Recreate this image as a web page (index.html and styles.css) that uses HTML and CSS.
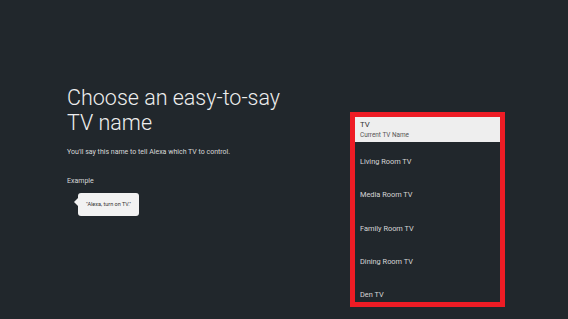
FILE: index.html
```html
<!DOCTYPE html>
<html lang="en">
<head>
  <meta charset="UTF-8">
  <title>Choose a TV name</title>
  <link rel="stylesheet" href="styles.css">
</head>
<body>
  <main class="screen">
    <section class="intro">
      <h1>Choose an easy-to-say<br>TV name</h1>
      <p class="lead">You'll say this name to tell Alexa which TV to control.</p>
      <p class="example-label">Example</p>
      <div class="bubble">"Alexa, turn on TV."</div>
    </section>
    <section class="picker">
      <ul class="names">
        <li class="name current">
          <span class="name-title">TV</span>
          <span class="name-sub">Current TV Name</span>
        </li>
        <li class="name">Living Room TV</li>
        <li class="name">Media Room TV</li>
        <li class="name">Family Room TV</li>
        <li class="name">Dining Room TV</li>
        <li class="name">Den TV</li>
      </ul>
    </section>
  </main>
</body>
</html>
```

FILE: styles.css
```css
body {
  margin: 0;
  background-color: #21272c;
  color: #e8e8e8;
  font-family: Roboto, "Liberation Sans", sans-serif;
}
.screen {
  width: 568px;
  height: 319px;
  display: flex;
  overflow: hidden;
}
.intro {
  width: 283px;
  padding: 85px 0 0 67px;
}
h1 {
  margin: 0;
  font-size: 21.5px;
  font-weight: 300;
  line-height: 25px;
  color: #eeeeee;
}
.lead {
  margin: 13px 0 0;
  font-size: 7px;
  line-height: 8px;
  color: #d8d8d8;
}
.example-label {
  margin: 21px 0 0;
  font-size: 7px;
  line-height: 8px;
  color: #d8d8d8;
}
.bubble {
  position: relative;
  display: inline-block;
  margin: 8px 0 0 11px;
  padding: 8px 8px 9px 8px;
  background: #f2f2f2;
  color: #333;
  font-size: 5.5px;
  line-height: 6px;
  border-radius: 3px;
}
.bubble::before {
  content: "";
  position: absolute;
  left: -4px;
  top: 5px;
  border-top: 4px solid transparent;
  border-bottom: 4px solid transparent;
  border-right: 4px solid #f2f2f2;
}
.picker {
  padding-top: 112px;
}
.names {
  list-style: none;
  margin: 0;
  padding: 0;
  width: 145px;
  height: 185px;
  border: 5px solid #ee1c25;
  overflow: hidden;
}
.name {
  height: 33.3px;
  display: flex;
  flex-direction: column;
  justify-content: center;
  padding-left: 5px;
  font-size: 7.4px;
  color: #d6d6d6;
}
.name.current {
  height: 25px;
  background: #eeeeee;
  color: #333;
  gap: 2px;
}
.name.current + .name {
  margin-top: 3px;
}
.name-title {
  font-size: 7.8px;
}
.name-sub {
  font-size: 6.4px;
  color: #555;
}
```
